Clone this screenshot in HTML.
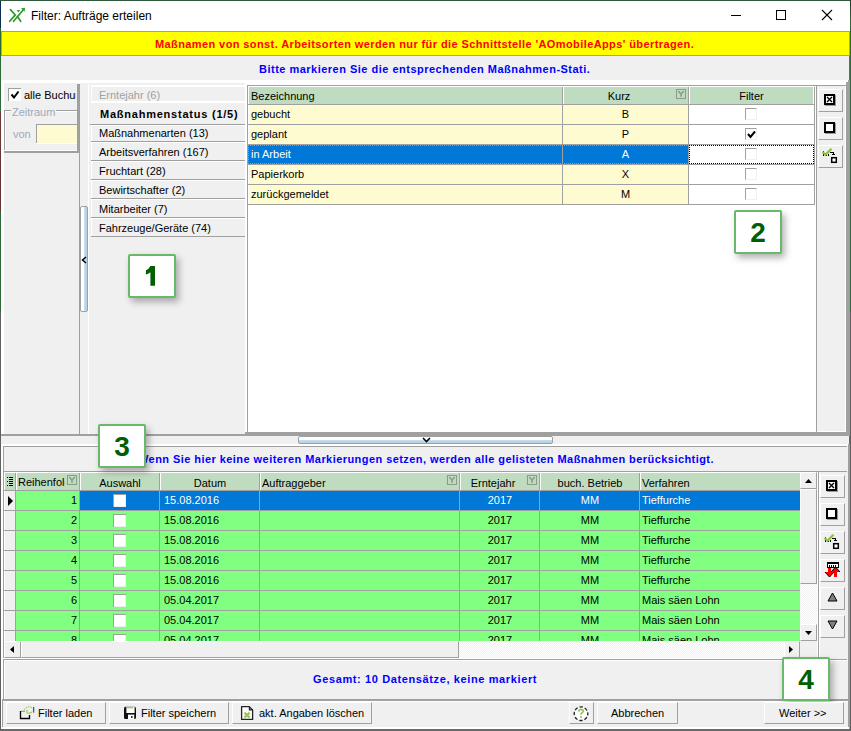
<!DOCTYPE html><html><head><meta charset="utf-8"><style>
*{box-sizing:border-box;margin:0;padding:0}
html,body{width:851px;height:731px;overflow:hidden;background:#2d5a3a}
body{position:relative;font-family:"Liberation Sans",sans-serif;font-size:11px;color:#000}
.a{position:absolute}
.t{white-space:nowrap;line-height:13px}
.btn{position:absolute;background:#f0f0f0;border-top:1px solid #fff;border-left:1px solid #fff;border-right:1px solid #a0a0a0;border-bottom:1px solid #a0a0a0}
.lbl{position:absolute;width:48px;height:44px;background:#fff;border:2px solid #6ab86a;box-shadow:3px 4px 7px rgba(0,0,0,.30);border-radius:2px;color:#006000;font-weight:bold;font-size:28px;text-align:center;line-height:42px}
.cb{position:absolute;width:12px;height:12px;background:#fff;border:1px solid #f0f0f0;border-top-color:#a0a0a0;border-left-color:#a0a0a0}
.cbw{position:absolute;width:13px;height:13px;background:#fff;border-top:1px solid #a0a0a0;border-left:1px solid #a0a0a0;box-shadow:inset -1px -1px 0 #f0f0f0}
</style></head><body>
<div class="a" style="left:1px;top:1px;width:849px;height:729px;background:#f0f0f0;"></div>
<div class="a" style="left:849px;top:1px;width:1px;height:730px;background:#6a6a6a;"></div>
<div class="a" style="left:850px;top:0px;width:1px;height:731px;background:linear-gradient(180deg,#1c3a2a 0,#2d6a3a 20px,#2d6a3a 312px,#606060 312px)"></div>
<div class="a" style="left:0px;top:729px;width:850px;height:2px;background:#6a6a6a;"></div>
<div class="a" style="left:0px;top:1px;width:1px;height:730px;background:linear-gradient(180deg,#0c2c50 0,#0c2c50 27px,#2d6a3a 27px,#2d6a3a 111px,#6a3434 111px,#6a3434 211px,#2d6a3a 211px,#2d6a3a 311px,#606060 311px)"></div>
<div class="a" style="left:1px;top:1px;width:849px;height:30px;background:#fff;"></div>
<svg class="a" style="left:6px;top:4px" width="24" height="24" viewBox="0 0 24 24"><g stroke="#2e9a2e" stroke-width="1.7" fill="none" stroke-linecap="round"><path d="M4.4 5.6 L9.3 10.9 L3.7 17.3"/><path d="M7.5 17.3 L17.2 6"/><path d="M11.4 12.6 L14.7 17.3"/></g><path d="M15 4.2 L19 3.8 L18.7 7.8 Z" fill="#2e9a2e"/><path d="M10.5 6.2 L14.2 5.9 L12.5 8.6 Z" fill="#2e9a2e"/></svg>
<div class="a t" style="left:31px;top:9px;font-size:12px;line-height:14px;color:#000">Filter: Aufträge erteilen</div>
<div class="a" style="left:731px;top:15px;width:10px;height:1px;background:#000;"></div>
<div class="a" style="left:776px;top:10px;width:10px;height:10px;border:1px solid #000"></div>
<svg class="a" style="left:821px;top:9px" width="12" height="12" viewBox="0 0 12 12"><path d="M1 1 L11 11 M11 1 L1 11" stroke="#000" stroke-width="1.1"/></svg>
<div class="a" style="left:1px;top:31px;width:849px;height:25px;background:#a0a0a0;"></div>
<div class="a" style="left:2px;top:32px;width:847px;height:23px;background:#ff0;"></div>
<div class="a t" style="left:155px;top:38px;color:#f00;font-weight:bold;letter-spacing:0.4px">Maßnamen von sonst. Arbeitsorten werden nur für die Schnittstelle 'AOmobileApps' übertragen.</div>
<div class="a t" style="left:259px;top:63px;color:#00f;font-weight:bold;letter-spacing:0.49px">Bitte markieren Sie die entsprechenden Maßnahmen-Stati.</div>
<div class="a" style="left:1px;top:80px;width:848px;height:3px;background:#fff;"></div>
<div class="a" style="left:245px;top:80px;width:604px;height:5px;background:#fff;"></div>
<div class="a" style="left:1px;top:80px;width:3px;height:356px;background:#fff;"></div>
<div class="a" style="left:848px;top:80px;width:2px;height:356px;background:#a0a0a0;"></div>
<div class="a" style="left:1px;top:434px;width:848px;height:2px;background:#a0a0a0;"></div>
<div class="a" style="left:4px;top:84px;width:75px;height:69px;background:#f0f0f0;"></div>
<div class="a" style="left:77px;top:84px;width:2px;height:69px;background:#a0a0a0;"></div>
<div class="a" style="left:4px;top:151px;width:75px;height:2px;background:#a0a0a0;"></div>
<div class="a" style="left:79px;top:84px;width:1px;height:351px;background:#a0a0a0;"></div>
<div class="a" style="left:88px;top:84px;width:1px;height:350px;background:#fff;"></div>
<div class="a" style="left:8px;top:88px;width:13px;height:13px;background:#fff;border-top:1px solid #a0a0a0;border-left:1px solid #a0a0a0"></div>
<svg class="a" style="left:10px;top:90px" width="10" height="10" viewBox="0 0 10 10"><path d="M1.5 4.5 L4 7.5 L8.5 1.5" stroke="#000" stroke-width="2" fill="none"/></svg>
<div class="a" style="left:24px;top:88px;width:52px;height:14px;overflow:hidden"><div class="t" style="line-height:13px;padding-top:1px">alle Buchungen</div></div>
<div class="a" style="left:4px;top:110px;width:73px;height:1px;background:#a0a0a0;"></div>
<div class="a" style="left:4px;top:110px;width:1px;height:41px;background:#a0a0a0;"></div>
<div class="a" style="left:5px;top:111px;width:72px;height:1px;background:#fff;"></div>
<div class="a" style="left:5px;top:111px;width:1px;height:39px;background:#fff;"></div>
<div class="a" style="left:4px;top:150px;width:73px;height:1px;background:#fff;"></div>
<div class="a t" style="left:11px;top:106px;color:#a0a8bc;background:#f0f0f0;padding:0 1px">Zeitraum</div>
<div class="a t" style="left:13px;top:128px;color:#a0a8bc">von</div>
<div class="a" style="left:36px;top:124px;width:1px;height:20px;background:#a0a0a0;"></div>
<div class="a" style="left:36px;top:124px;width:41px;height:1px;background:#a0a0a0;"></div>
<div class="a" style="left:37px;top:125px;width:40px;height:18px;background:#fffbd0;"></div>
<div class="a" style="left:36px;top:143px;width:41px;height:1px;background:#fff;"></div>
<div class="a" style="left:80px;top:206px;width:8px;height:106px;border:1px solid #a0a0a0;border-radius:2px;background:linear-gradient(90deg,#fff 0,#fff 3px,#c4dff0 3px,#b4cfe0 100%)"></div>
<svg class="a" style="left:81px;top:256px" width="6" height="8" viewBox="0 0 6 8"><path d="M5 1 L1.5 4 L5 7" stroke="#000" stroke-width="1.5" fill="none"/></svg>
<div class="a" style="left:89px;top:84px;width:156px;height:350px;background:#f0f0f0;"></div>
<div class="a" style="left:245px;top:84px;width:2px;height:348px;background:#fff;"></div>
<div class="a" style="left:91px;top:85px;width:154px;height:2px;background:#fff;"></div>
<div class="a" style="left:91px;top:85px;width:1px;height:17px;background:#fff;"></div>
<div class="a" style="left:92px;top:87px;width:153px;height:14px;background:#f0f0f0;"></div>
<div class="a" style="left:91px;top:101px;width:154px;height:2px;background:#fff;"></div>
<div class="a t" style="left:99px;top:89px;color:#a0a0a0">Erntejahr (6)</div>
<div class="a" style="left:90px;top:103px;width:155px;height:21px;background:#f0f0f0;"></div>
<div class="a" style="left:90px;top:124px;width:155px;height:1px;background:#a0a0a0;"></div>
<div class="a t" style="left:100px;top:108px;font-weight:bold;letter-spacing:0.77px;font-size:11px">Maßnahmenstatus (1/5)</div>
<div class="a" style="left:91px;top:125px;width:154px;height:1px;background:#fff;"></div>
<div class="a" style="left:91px;top:125px;width:1px;height:16px;background:#fff;"></div>
<div class="a" style="left:91px;top:141px;width:154px;height:1px;background:#a0a0a0;"></div>
<div class="a t" style="left:99px;top:127px;">Maßnahmenarten (13)</div>
<div class="a" style="left:91px;top:142px;width:154px;height:1px;background:#fff;"></div>
<div class="a" style="left:91px;top:142px;width:1px;height:18px;background:#fff;"></div>
<div class="a" style="left:91px;top:160px;width:154px;height:1px;background:#a0a0a0;"></div>
<div class="a t" style="left:99px;top:146px;">Arbeitsverfahren (167)</div>
<div class="a" style="left:91px;top:161px;width:154px;height:1px;background:#fff;"></div>
<div class="a" style="left:91px;top:161px;width:1px;height:18px;background:#fff;"></div>
<div class="a" style="left:91px;top:179px;width:154px;height:1px;background:#a0a0a0;"></div>
<div class="a t" style="left:99px;top:165px;">Fruchtart (28)</div>
<div class="a" style="left:91px;top:180px;width:154px;height:1px;background:#fff;"></div>
<div class="a" style="left:91px;top:180px;width:1px;height:18px;background:#fff;"></div>
<div class="a" style="left:91px;top:198px;width:154px;height:1px;background:#a0a0a0;"></div>
<div class="a t" style="left:99px;top:184px;">Bewirtschafter (2)</div>
<div class="a" style="left:91px;top:199px;width:154px;height:1px;background:#fff;"></div>
<div class="a" style="left:91px;top:199px;width:1px;height:18px;background:#fff;"></div>
<div class="a" style="left:91px;top:217px;width:154px;height:1px;background:#a0a0a0;"></div>
<div class="a t" style="left:99px;top:203px;">Mitarbeiter (7)</div>
<div class="a" style="left:91px;top:218px;width:154px;height:1px;background:#fff;"></div>
<div class="a" style="left:91px;top:218px;width:1px;height:18px;background:#fff;"></div>
<div class="a" style="left:91px;top:236px;width:154px;height:1px;background:#a0a0a0;"></div>
<div class="a t" style="left:99px;top:222px;">Fahrzeuge/Geräte (74)</div>
<div class="a" style="left:247px;top:85px;width:570px;height:347px;background:#a0a0a0;"></div>
<div class="a" style="left:248px;top:86px;width:568px;height:346px;background:#fff;"></div>
<div class="a" style="left:814px;top:87px;width:1px;height:118px;background:#a0a0a0;"></div>
<div class="a" style="left:249px;top:87px;width:564px;height:17px;background:#c0dcc0;"></div>
<div class="a" style="left:248px;top:104px;width:566px;height:1px;background:#a0a0a0;"></div>
<div class="a" style="left:562px;top:87px;width:1px;height:118px;background:#a0a0a0;"></div>
<div class="a" style="left:563px;top:87px;width:1px;height:17px;background:#fff;"></div>
<div class="a" style="left:688px;top:87px;width:1px;height:118px;background:#a0a0a0;"></div>
<div class="a" style="left:689px;top:87px;width:1px;height:17px;background:#fff;"></div>
<div class="a t" style="left:251px;top:90px;">Bezeichnung</div>
<div class="a t" style="left:563px;top:90px;width:112px;text-align:center">Kurz</div>
<div class="a t" style="left:689px;top:90px;width:125px;text-align:center">Filter</div>
<svg class="a" style="left:676px;top:89px" width="10" height="10" viewBox="0 0 10 10"><rect x="0.5" y="0.5" width="9" height="9" fill="none" stroke="#8a9c8a"/><path d="M2.3 2.2 L4.5 4.5 M7.7 2.2 L5.5 4.5" stroke="#7a8a7a" stroke-width="1.2"/><path d="M5 4.2 V7.8" stroke="#7a8a7a" stroke-width="1.3"/></svg>
<div class="a" style="left:249px;top:105px;width:313px;height:19px;background:#fffbd0;"></div>
<div class="a" style="left:563px;top:105px;width:125px;height:19px;background:#fffbd0;"></div>
<div class="a" style="left:689px;top:105px;width:125px;height:19px;background:#fff;"></div>
<div class="a" style="left:248px;top:124px;width:566px;height:1px;background:#a0a0a0;"></div>
<div class="a t" style="left:251px;top:108px;color:#000">gebucht</div>
<div class="a t" style="left:563px;top:108px;width:125px;text-align:center;color:#000">B</div>
<div class="cb" style="left:745px;top:108px"></div>
<div class="a" style="left:249px;top:125px;width:313px;height:19px;background:#fffbd0;"></div>
<div class="a" style="left:563px;top:125px;width:125px;height:19px;background:#fffbd0;"></div>
<div class="a" style="left:689px;top:125px;width:125px;height:19px;background:#fff;"></div>
<div class="a" style="left:248px;top:144px;width:566px;height:1px;background:#a0a0a0;"></div>
<div class="a t" style="left:251px;top:128px;color:#000">geplant</div>
<div class="a t" style="left:563px;top:128px;width:125px;text-align:center;color:#000">P</div>
<div class="cb" style="left:745px;top:128px"></div>
<svg class="a" style="left:746px;top:129px" width="11" height="11" viewBox="0 0 11 11"><path d="M2 5 L4.5 8 L9 2.5" stroke="#000" stroke-width="2" fill="none"/></svg>
<div class="a" style="left:249px;top:145px;width:313px;height:19px;background:#0078d7;"></div>
<div class="a" style="left:563px;top:145px;width:125px;height:19px;background:#0078d7;"></div>
<div class="a" style="left:689px;top:145px;width:125px;height:19px;background:#fff;"></div>
<div class="a" style="left:248px;top:164px;width:566px;height:1px;background:#a0a0a0;"></div>
<div class="a t" style="left:251px;top:148px;color:#fff">in Arbeit</div>
<div class="a t" style="left:563px;top:148px;width:125px;text-align:center;color:#fff">A</div>
<div class="cb" style="left:745px;top:148px"></div>
<div class="a" style="left:249px;top:165px;width:313px;height:19px;background:#fffbd0;"></div>
<div class="a" style="left:563px;top:165px;width:125px;height:19px;background:#fffbd0;"></div>
<div class="a" style="left:689px;top:165px;width:125px;height:19px;background:#fff;"></div>
<div class="a" style="left:248px;top:184px;width:566px;height:1px;background:#a0a0a0;"></div>
<div class="a t" style="left:251px;top:168px;color:#000">Papierkorb</div>
<div class="a t" style="left:563px;top:168px;width:125px;text-align:center;color:#000">X</div>
<div class="cb" style="left:745px;top:168px"></div>
<div class="a" style="left:249px;top:185px;width:313px;height:19px;background:#fffbd0;"></div>
<div class="a" style="left:563px;top:185px;width:125px;height:19px;background:#fffbd0;"></div>
<div class="a" style="left:689px;top:185px;width:125px;height:19px;background:#fff;"></div>
<div class="a" style="left:248px;top:204px;width:566px;height:1px;background:#a0a0a0;"></div>
<div class="a t" style="left:251px;top:188px;color:#000">zurückgemeldet</div>
<div class="a t" style="left:563px;top:188px;width:125px;text-align:center;color:#000">M</div>
<div class="cb" style="left:745px;top:188px"></div>
<div class="a" style="left:248px;top:145px;width:1px;height:19px;background:#0078d7;"></div>
<div class="a" style="left:248px;top:145px;width:441px;height:19px;border:1px dotted #f08a20;border-right:none"></div>
<div class="a" style="left:689px;top:145px;width:125px;height:19px;border:1px dotted #000"></div>
<div class="a" style="left:816px;top:85px;width:30px;height:1px;background:#a0a0a0;"></div>
<div class="a" style="left:817px;top:86px;width:28px;height:345px;background:#f0f0f0;"></div>
<div class="a" style="left:845px;top:86px;width:1px;height:346px;background:#fff;"></div>
<div class="a" style="left:817px;top:431px;width:29px;height:1px;background:#fff;"></div>
<div class="a" style="left:846px;top:82px;width:2px;height:352px;background:#a0a0a0;"></div>
<div class="a" style="left:245px;top:432px;width:603px;height:2px;background:#a0a0a0;"></div>
<div class="btn" style="left:818px;top:89px;width:25px;height:23px"></div>
<div class="btn" style="left:818px;top:117px;width:25px;height:23px"></div>
<div class="btn" style="left:818px;top:145px;width:25px;height:23px"></div>
<svg class="a" style="left:824px;top:94px" width="13" height="13" viewBox="0 0 13 13" shape-rendering="crispEdges"><rect x="0" y="0" width="11" height="11" fill="#000"/><rect x="2" y="2" width="7" height="7" fill="#fff"/><rect x="11" y="1" width="1" height="11" fill="#9a9a9a"/><rect x="1" y="11" width="11" height="1" fill="#9a9a9a"/></svg>
<svg class="a" style="left:824px;top:94px" width="11" height="11" viewBox="0 0 11 11"><path d="M3 3 L8 8 M8 3 L3 8" stroke="#000" stroke-width="1.4"/></svg>
<svg class="a" style="left:824px;top:122px" width="13" height="13" viewBox="0 0 13 13" shape-rendering="crispEdges"><rect x="0" y="0" width="11" height="11" fill="#000"/><rect x="2" y="2" width="7" height="7" fill="#fff"/><rect x="11" y="1" width="1" height="11" fill="#9a9a9a"/><rect x="1" y="11" width="11" height="1" fill="#9a9a9a"/></svg>
<svg class="a" style="left:822px;top:148px" width="18" height="18" viewBox="0 0 18 18"><g shape-rendering="crispEdges" fill="#000"><rect x="1" y="3" width="1" height="1"/><rect x="1" y="6" width="1" height="2"/><rect x="3" y="7" width="2" height="1"/><rect x="6" y="6" width="1" height="2"/><rect x="8" y="4" width="4" height="1"/><rect x="11" y="4" width="1" height="3"/><rect x="10" y="6" width="3" height="1"/></g><rect x="9.7" y="9.7" width="4.6" height="4.6" fill="#fff" stroke="#000" stroke-width="1.5"/><path d="M0.5 4 L3.5 6.8 L9.5 0.8" stroke="#8cbf46" stroke-width="2.2" fill="none"/></svg>
<div class="lbl" style="left:128px;top:254px"><svg style="position:absolute;left:0;top:0" width="44" height="40" viewBox="0 0 44 40"><path d="M20.4 10 H25 V29.7 H20.4 V16.2 Q18.3 18 15.9 18.6 V14.2 Q19 13 20.4 10 Z" fill="#006000"/></svg></div>
<div class="lbl" style="left:734px;top:210px">2</div>
<div class="a" style="left:298px;top:436px;width:255px;height:8px;border:1px solid #a0a0a0;border-radius:2px;background:linear-gradient(180deg,#fff 0,#fff 3px,#c4dff0 3px,#b4cfe0 100%)"></div>
<svg class="a" style="left:422px;top:437px" width="9" height="6" viewBox="0 0 9 6"><path d="M1 1 L4.5 4.5 L8 1" stroke="#000" stroke-width="1.6" fill="none"/></svg>
<div class="a" style="left:1px;top:444px;width:847px;height:2px;background:#fff;"></div>
<div class="a" style="left:3px;top:446px;width:844px;height:1px;background:#a0a0a0;"></div>
<div class="a" style="left:1px;top:446px;width:2px;height:283px;background:#fff;"></div>
<div class="a" style="left:3px;top:446px;width:1px;height:255px;background:#a0a0a0;"></div>
<div class="a" style="left:848px;top:444px;width:2px;height:285px;background:#a0a0a0;"></div>
<div class="a t" style="left:138px;top:453px;color:#00f;font-weight:bold;letter-spacing:0.44px">Wenn Sie hier keine weiteren Markierungen setzen, werden alle gelisteten Maßnahmen berücksichtigt.</div>
<div class="a" style="left:3px;top:471px;width:816px;height:187px;background:#a0a0a0;"></div>
<div class="a" style="left:4px;top:472px;width:814px;height:185px;background:#fff;"></div>
<div class="a" style="left:5px;top:473px;width:795px;height:17px;background:#c0dcc0;"></div>
<div class="a" style="left:4px;top:490px;width:796px;height:1px;background:#a0a0a0;"></div>
<div class="a" style="left:15px;top:473px;width:1px;height:168px;background:#a0a0a0;"></div>
<div class="a" style="left:16px;top:473px;width:1px;height:17px;background:#fff;"></div>
<div class="a" style="left:79px;top:473px;width:1px;height:168px;background:#a0a0a0;"></div>
<div class="a" style="left:80px;top:473px;width:1px;height:17px;background:#fff;"></div>
<div class="a" style="left:159px;top:473px;width:1px;height:168px;background:#a0a0a0;"></div>
<div class="a" style="left:160px;top:473px;width:1px;height:17px;background:#fff;"></div>
<div class="a" style="left:259px;top:473px;width:1px;height:168px;background:#a0a0a0;"></div>
<div class="a" style="left:260px;top:473px;width:1px;height:17px;background:#fff;"></div>
<div class="a" style="left:459px;top:473px;width:1px;height:168px;background:#a0a0a0;"></div>
<div class="a" style="left:460px;top:473px;width:1px;height:17px;background:#fff;"></div>
<div class="a" style="left:539px;top:473px;width:1px;height:168px;background:#a0a0a0;"></div>
<div class="a" style="left:540px;top:473px;width:1px;height:17px;background:#fff;"></div>
<div class="a" style="left:639px;top:473px;width:1px;height:168px;background:#a0a0a0;"></div>
<div class="a" style="left:640px;top:473px;width:1px;height:17px;background:#fff;"></div>
<svg class="a" style="left:6px;top:476px" width="8" height="11" viewBox="0 0 8 11" shape-rendering="crispEdges"><g fill="#000"><rect x="1" y="1" width="1" height="1"/><rect x="1" y="5" width="1" height="1"/><rect x="1" y="9" width="1" height="1"/><rect x="3" y="1" width="4" height="1"/><rect x="3" y="3" width="4" height="1"/><rect x="3" y="5" width="4" height="1"/><rect x="3" y="7" width="4" height="1"/><rect x="3" y="9" width="4" height="1"/></g></svg>
<div class="a" style="left:18px;top:476px;width:47px;height:13px;overflow:hidden"><div class="t">Reihenfolge</div></div>
<svg class="a" style="left:67px;top:475px" width="10" height="10" viewBox="0 0 10 10"><rect x="0.5" y="0.5" width="9" height="9" fill="none" stroke="#8a9c8a"/><path d="M2.3 2.2 L4.5 4.5 M7.7 2.2 L5.5 4.5" stroke="#7a8a7a" stroke-width="1.2"/><path d="M5 4.2 V7.8" stroke="#7a8a7a" stroke-width="1.3"/></svg>
<svg class="a" style="left:447px;top:475px" width="10" height="10" viewBox="0 0 10 10"><rect x="0.5" y="0.5" width="9" height="9" fill="none" stroke="#8a9c8a"/><path d="M2.3 2.2 L4.5 4.5 M7.7 2.2 L5.5 4.5" stroke="#7a8a7a" stroke-width="1.2"/><path d="M5 4.2 V7.8" stroke="#7a8a7a" stroke-width="1.3"/></svg>
<svg class="a" style="left:527px;top:475px" width="10" height="10" viewBox="0 0 10 10"><rect x="0.5" y="0.5" width="9" height="9" fill="none" stroke="#8a9c8a"/><path d="M2.3 2.2 L4.5 4.5 M7.7 2.2 L5.5 4.5" stroke="#7a8a7a" stroke-width="1.2"/><path d="M5 4.2 V7.8" stroke="#7a8a7a" stroke-width="1.3"/></svg>
<div class="a t" style="left:80px;top:477px;width:80px;text-align:center">Auswahl</div>
<div class="a t" style="left:160px;top:477px;width:100px;text-align:center">Datum</div>
<div class="a t" style="left:262px;top:477px;">Auftraggeber</div>
<div class="a t" style="left:460px;top:477px;width:66px;text-align:center">Erntejahr</div>
<div class="a t" style="left:540px;top:477px;width:100px;text-align:center">buch. Betrieb</div>
<div class="a t" style="left:642px;top:477px;">Verfahren</div>
<div class="a" style="left:4px;top:491px;width:796px;height:150px;overflow:hidden">
<div class="a" style="left:0px;top:0px;width:1px;height:19px;background:#fff;"></div>
<div class="a" style="left:1px;top:0px;width:10px;height:19px;background:#f0f0f0;"></div>
<div class="a" style="left:0px;top:19px;width:11px;height:1px;background:#a0a0a0;"></div>
<div class="a" style="left:12px;top:0px;width:63px;height:19px;background:#80ff80;"></div>
<div class="a" style="left:76px;top:0px;width:720px;height:19px;background:#0078d7;"></div>
<div class="a" style="left:12px;top:19px;width:784px;height:1px;background:#a0a0a0;"></div>
<div class="a" style="left:11px;top:0px;width:1px;height:20px;background:#a0a0a0;"></div>
<div class="a" style="left:75px;top:0px;width:1px;height:20px;background:#a0a0a0;"></div>
<div class="a" style="left:155px;top:0px;width:1px;height:20px;background:#a0a0a0;"></div>
<div class="a" style="left:255px;top:0px;width:1px;height:20px;background:#a0a0a0;"></div>
<div class="a" style="left:455px;top:0px;width:1px;height:20px;background:#a0a0a0;"></div>
<div class="a" style="left:535px;top:0px;width:1px;height:20px;background:#a0a0a0;"></div>
<div class="a" style="left:635px;top:0px;width:1px;height:20px;background:#a0a0a0;"></div>
<div class="a t" style="left:12px;top:3px;width:61px;text-align:right">1</div>
<div class="cbw" style="left:109px;top:3px"></div>
<div class="a t" style="left:160px;top:3px;color:#fff">15.08.2016</div>
<div class="a t" style="left:456px;top:3px;width:80px;text-align:center;color:#fff">2017</div>
<div class="a t" style="left:536px;top:3px;width:100px;text-align:center;color:#fff">MM</div>
<div class="a t" style="left:638px;top:3px;color:#fff">Tieffurche</div>
<div class="a" style="left:0px;top:20px;width:1px;height:19px;background:#fff;"></div>
<div class="a" style="left:1px;top:20px;width:10px;height:19px;background:#f0f0f0;"></div>
<div class="a" style="left:0px;top:39px;width:11px;height:1px;background:#a0a0a0;"></div>
<div class="a" style="left:12px;top:20px;width:63px;height:19px;background:#80ff80;"></div>
<div class="a" style="left:76px;top:20px;width:720px;height:19px;background:#80ff80;"></div>
<div class="a" style="left:12px;top:39px;width:784px;height:1px;background:#a0a0a0;"></div>
<div class="a" style="left:11px;top:20px;width:1px;height:20px;background:#a0a0a0;"></div>
<div class="a" style="left:75px;top:20px;width:1px;height:20px;background:#a0a0a0;"></div>
<div class="a" style="left:155px;top:20px;width:1px;height:20px;background:#a0a0a0;"></div>
<div class="a" style="left:255px;top:20px;width:1px;height:20px;background:#a0a0a0;"></div>
<div class="a" style="left:455px;top:20px;width:1px;height:20px;background:#a0a0a0;"></div>
<div class="a" style="left:535px;top:20px;width:1px;height:20px;background:#a0a0a0;"></div>
<div class="a" style="left:635px;top:20px;width:1px;height:20px;background:#a0a0a0;"></div>
<div class="a t" style="left:12px;top:23px;width:61px;text-align:right">2</div>
<div class="cbw" style="left:109px;top:23px"></div>
<div class="a t" style="left:160px;top:23px;color:#000">15.08.2016</div>
<div class="a t" style="left:456px;top:23px;width:80px;text-align:center;color:#000">2017</div>
<div class="a t" style="left:536px;top:23px;width:100px;text-align:center;color:#000">MM</div>
<div class="a t" style="left:638px;top:23px;color:#000">Tieffurche</div>
<div class="a" style="left:0px;top:40px;width:1px;height:19px;background:#fff;"></div>
<div class="a" style="left:1px;top:40px;width:10px;height:19px;background:#f0f0f0;"></div>
<div class="a" style="left:0px;top:59px;width:11px;height:1px;background:#a0a0a0;"></div>
<div class="a" style="left:12px;top:40px;width:63px;height:19px;background:#80ff80;"></div>
<div class="a" style="left:76px;top:40px;width:720px;height:19px;background:#80ff80;"></div>
<div class="a" style="left:12px;top:59px;width:784px;height:1px;background:#a0a0a0;"></div>
<div class="a" style="left:11px;top:40px;width:1px;height:20px;background:#a0a0a0;"></div>
<div class="a" style="left:75px;top:40px;width:1px;height:20px;background:#a0a0a0;"></div>
<div class="a" style="left:155px;top:40px;width:1px;height:20px;background:#a0a0a0;"></div>
<div class="a" style="left:255px;top:40px;width:1px;height:20px;background:#a0a0a0;"></div>
<div class="a" style="left:455px;top:40px;width:1px;height:20px;background:#a0a0a0;"></div>
<div class="a" style="left:535px;top:40px;width:1px;height:20px;background:#a0a0a0;"></div>
<div class="a" style="left:635px;top:40px;width:1px;height:20px;background:#a0a0a0;"></div>
<div class="a t" style="left:12px;top:43px;width:61px;text-align:right">3</div>
<div class="cbw" style="left:109px;top:43px"></div>
<div class="a t" style="left:160px;top:43px;color:#000">15.08.2016</div>
<div class="a t" style="left:456px;top:43px;width:80px;text-align:center;color:#000">2017</div>
<div class="a t" style="left:536px;top:43px;width:100px;text-align:center;color:#000">MM</div>
<div class="a t" style="left:638px;top:43px;color:#000">Tieffurche</div>
<div class="a" style="left:0px;top:60px;width:1px;height:19px;background:#fff;"></div>
<div class="a" style="left:1px;top:60px;width:10px;height:19px;background:#f0f0f0;"></div>
<div class="a" style="left:0px;top:79px;width:11px;height:1px;background:#a0a0a0;"></div>
<div class="a" style="left:12px;top:60px;width:63px;height:19px;background:#80ff80;"></div>
<div class="a" style="left:76px;top:60px;width:720px;height:19px;background:#80ff80;"></div>
<div class="a" style="left:12px;top:79px;width:784px;height:1px;background:#a0a0a0;"></div>
<div class="a" style="left:11px;top:60px;width:1px;height:20px;background:#a0a0a0;"></div>
<div class="a" style="left:75px;top:60px;width:1px;height:20px;background:#a0a0a0;"></div>
<div class="a" style="left:155px;top:60px;width:1px;height:20px;background:#a0a0a0;"></div>
<div class="a" style="left:255px;top:60px;width:1px;height:20px;background:#a0a0a0;"></div>
<div class="a" style="left:455px;top:60px;width:1px;height:20px;background:#a0a0a0;"></div>
<div class="a" style="left:535px;top:60px;width:1px;height:20px;background:#a0a0a0;"></div>
<div class="a" style="left:635px;top:60px;width:1px;height:20px;background:#a0a0a0;"></div>
<div class="a t" style="left:12px;top:63px;width:61px;text-align:right">4</div>
<div class="cbw" style="left:109px;top:63px"></div>
<div class="a t" style="left:160px;top:63px;color:#000">15.08.2016</div>
<div class="a t" style="left:456px;top:63px;width:80px;text-align:center;color:#000">2017</div>
<div class="a t" style="left:536px;top:63px;width:100px;text-align:center;color:#000">MM</div>
<div class="a t" style="left:638px;top:63px;color:#000">Tieffurche</div>
<div class="a" style="left:0px;top:80px;width:1px;height:19px;background:#fff;"></div>
<div class="a" style="left:1px;top:80px;width:10px;height:19px;background:#f0f0f0;"></div>
<div class="a" style="left:0px;top:99px;width:11px;height:1px;background:#a0a0a0;"></div>
<div class="a" style="left:12px;top:80px;width:63px;height:19px;background:#80ff80;"></div>
<div class="a" style="left:76px;top:80px;width:720px;height:19px;background:#80ff80;"></div>
<div class="a" style="left:12px;top:99px;width:784px;height:1px;background:#a0a0a0;"></div>
<div class="a" style="left:11px;top:80px;width:1px;height:20px;background:#a0a0a0;"></div>
<div class="a" style="left:75px;top:80px;width:1px;height:20px;background:#a0a0a0;"></div>
<div class="a" style="left:155px;top:80px;width:1px;height:20px;background:#a0a0a0;"></div>
<div class="a" style="left:255px;top:80px;width:1px;height:20px;background:#a0a0a0;"></div>
<div class="a" style="left:455px;top:80px;width:1px;height:20px;background:#a0a0a0;"></div>
<div class="a" style="left:535px;top:80px;width:1px;height:20px;background:#a0a0a0;"></div>
<div class="a" style="left:635px;top:80px;width:1px;height:20px;background:#a0a0a0;"></div>
<div class="a t" style="left:12px;top:83px;width:61px;text-align:right">5</div>
<div class="cbw" style="left:109px;top:83px"></div>
<div class="a t" style="left:160px;top:83px;color:#000">15.08.2016</div>
<div class="a t" style="left:456px;top:83px;width:80px;text-align:center;color:#000">2017</div>
<div class="a t" style="left:536px;top:83px;width:100px;text-align:center;color:#000">MM</div>
<div class="a t" style="left:638px;top:83px;color:#000">Tieffurche</div>
<div class="a" style="left:0px;top:100px;width:1px;height:19px;background:#fff;"></div>
<div class="a" style="left:1px;top:100px;width:10px;height:19px;background:#f0f0f0;"></div>
<div class="a" style="left:0px;top:119px;width:11px;height:1px;background:#a0a0a0;"></div>
<div class="a" style="left:12px;top:100px;width:63px;height:19px;background:#80ff80;"></div>
<div class="a" style="left:76px;top:100px;width:720px;height:19px;background:#80ff80;"></div>
<div class="a" style="left:12px;top:119px;width:784px;height:1px;background:#a0a0a0;"></div>
<div class="a" style="left:11px;top:100px;width:1px;height:20px;background:#a0a0a0;"></div>
<div class="a" style="left:75px;top:100px;width:1px;height:20px;background:#a0a0a0;"></div>
<div class="a" style="left:155px;top:100px;width:1px;height:20px;background:#a0a0a0;"></div>
<div class="a" style="left:255px;top:100px;width:1px;height:20px;background:#a0a0a0;"></div>
<div class="a" style="left:455px;top:100px;width:1px;height:20px;background:#a0a0a0;"></div>
<div class="a" style="left:535px;top:100px;width:1px;height:20px;background:#a0a0a0;"></div>
<div class="a" style="left:635px;top:100px;width:1px;height:20px;background:#a0a0a0;"></div>
<div class="a t" style="left:12px;top:103px;width:61px;text-align:right">6</div>
<div class="cbw" style="left:109px;top:103px"></div>
<div class="a t" style="left:160px;top:103px;color:#000">05.04.2017</div>
<div class="a t" style="left:456px;top:103px;width:80px;text-align:center;color:#000">2017</div>
<div class="a t" style="left:536px;top:103px;width:100px;text-align:center;color:#000">MM</div>
<div class="a t" style="left:638px;top:103px;color:#000">Mais säen Lohn</div>
<div class="a" style="left:0px;top:120px;width:1px;height:19px;background:#fff;"></div>
<div class="a" style="left:1px;top:120px;width:10px;height:19px;background:#f0f0f0;"></div>
<div class="a" style="left:0px;top:139px;width:11px;height:1px;background:#a0a0a0;"></div>
<div class="a" style="left:12px;top:120px;width:63px;height:19px;background:#80ff80;"></div>
<div class="a" style="left:76px;top:120px;width:720px;height:19px;background:#80ff80;"></div>
<div class="a" style="left:12px;top:139px;width:784px;height:1px;background:#a0a0a0;"></div>
<div class="a" style="left:11px;top:120px;width:1px;height:20px;background:#a0a0a0;"></div>
<div class="a" style="left:75px;top:120px;width:1px;height:20px;background:#a0a0a0;"></div>
<div class="a" style="left:155px;top:120px;width:1px;height:20px;background:#a0a0a0;"></div>
<div class="a" style="left:255px;top:120px;width:1px;height:20px;background:#a0a0a0;"></div>
<div class="a" style="left:455px;top:120px;width:1px;height:20px;background:#a0a0a0;"></div>
<div class="a" style="left:535px;top:120px;width:1px;height:20px;background:#a0a0a0;"></div>
<div class="a" style="left:635px;top:120px;width:1px;height:20px;background:#a0a0a0;"></div>
<div class="a t" style="left:12px;top:123px;width:61px;text-align:right">7</div>
<div class="cbw" style="left:109px;top:123px"></div>
<div class="a t" style="left:160px;top:123px;color:#000">05.04.2017</div>
<div class="a t" style="left:456px;top:123px;width:80px;text-align:center;color:#000">2017</div>
<div class="a t" style="left:536px;top:123px;width:100px;text-align:center;color:#000">MM</div>
<div class="a t" style="left:638px;top:123px;color:#000">Mais säen Lohn</div>
<div class="a" style="left:0px;top:140px;width:1px;height:19px;background:#fff;"></div>
<div class="a" style="left:1px;top:140px;width:10px;height:19px;background:#f0f0f0;"></div>
<div class="a" style="left:0px;top:159px;width:11px;height:1px;background:#a0a0a0;"></div>
<div class="a" style="left:12px;top:140px;width:63px;height:19px;background:#80ff80;"></div>
<div class="a" style="left:76px;top:140px;width:720px;height:19px;background:#80ff80;"></div>
<div class="a" style="left:12px;top:159px;width:784px;height:1px;background:#a0a0a0;"></div>
<div class="a" style="left:11px;top:140px;width:1px;height:20px;background:#a0a0a0;"></div>
<div class="a" style="left:75px;top:140px;width:1px;height:20px;background:#a0a0a0;"></div>
<div class="a" style="left:155px;top:140px;width:1px;height:20px;background:#a0a0a0;"></div>
<div class="a" style="left:255px;top:140px;width:1px;height:20px;background:#a0a0a0;"></div>
<div class="a" style="left:455px;top:140px;width:1px;height:20px;background:#a0a0a0;"></div>
<div class="a" style="left:535px;top:140px;width:1px;height:20px;background:#a0a0a0;"></div>
<div class="a" style="left:635px;top:140px;width:1px;height:20px;background:#a0a0a0;"></div>
<div class="a t" style="left:12px;top:143px;width:61px;text-align:right">8</div>
<div class="cbw" style="left:109px;top:143px"></div>
<div class="a t" style="left:160px;top:143px;color:#000">05.04.2017</div>
<div class="a t" style="left:456px;top:143px;width:80px;text-align:center;color:#000">2017</div>
<div class="a t" style="left:536px;top:143px;width:100px;text-align:center;color:#000">MM</div>
<div class="a t" style="left:638px;top:143px;color:#000">Mais säen Lohn</div>
</div>
<svg class="a" style="left:8px;top:496px" width="6" height="10" viewBox="0 0 6 10"><path d="M0 0 L5 5 L0 10 Z" fill="#000"/></svg>
<div class="a" style="left:800px;top:472px;width:17px;height:169px;background-color:#f0f0f0;background-image:repeating-conic-gradient(#fff 0 25%,#f0f0f0 0 50%);background-size:2px 2px"></div>
<div class="btn" style="left:800px;top:472px;width:17px;height:17px"></div>
<svg class="a" style="left:805px;top:479px" width="7" height="4" viewBox="0 0 7 4"><path d="M0 4 L3.5 0 L7 4 Z" fill="#000"/></svg>
<div class="btn" style="left:800px;top:489px;width:17px;height:95px"></div>
<div class="btn" style="left:800px;top:624px;width:17px;height:17px"></div>
<svg class="a" style="left:805px;top:631px" width="7" height="4" viewBox="0 0 7 4"><path d="M0 0 L3.5 4 L7 0 Z" fill="#000"/></svg>
<div class="a" style="left:4px;top:641px;width:796px;height:17px;background-color:#f0f0f0;background-image:repeating-conic-gradient(#fff 0 25%,#f0f0f0 0 50%);background-size:2px 2px"></div>
<div class="btn" style="left:4px;top:641px;width:17px;height:17px"></div>
<svg class="a" style="left:10px;top:646px" width="4" height="7" viewBox="0 0 4 7"><path d="M4 0 L0 3.5 L4 7 Z" fill="#000"/></svg>
<div class="btn" style="left:21px;top:641px;width:438px;height:17px"></div>
<div class="btn" style="left:784px;top:641px;width:16px;height:17px"></div>
<svg class="a" style="left:789px;top:646px" width="4" height="7" viewBox="0 0 4 7"><path d="M0 0 L4 3.5 L0 7 Z" fill="#000"/></svg>
<div class="a" style="left:800px;top:641px;width:17px;height:17px;background:#f0f0f0;"></div>
<div class="a" style="left:3px;top:658px;width:816px;height:1px;background:#fff;"></div>
<div class="a" style="left:818px;top:471px;width:29px;height:1px;background:#a0a0a0;"></div>
<div class="a" style="left:819px;top:472px;width:1px;height:186px;background:#fff;"></div>
<div class="a" style="left:820px;top:472px;width:27px;height:186px;background:#f0f0f0;"></div>
<div class="btn" style="left:820px;top:475px;width:25px;height:23px"></div>
<div class="btn" style="left:820px;top:503px;width:25px;height:23px"></div>
<div class="btn" style="left:820px;top:531px;width:25px;height:23px"></div>
<div class="btn" style="left:820px;top:559px;width:25px;height:23px"></div>
<div class="btn" style="left:820px;top:587px;width:25px;height:23px"></div>
<div class="btn" style="left:820px;top:615px;width:25px;height:23px"></div>
<svg class="a" style="left:826px;top:480px" width="13" height="13" viewBox="0 0 13 13" shape-rendering="crispEdges"><rect x="0" y="0" width="11" height="11" fill="#000"/><rect x="2" y="2" width="7" height="7" fill="#fff"/><rect x="11" y="1" width="1" height="11" fill="#9a9a9a"/><rect x="1" y="11" width="11" height="1" fill="#9a9a9a"/></svg>
<svg class="a" style="left:826px;top:480px" width="11" height="11" viewBox="0 0 11 11"><path d="M3 3 L8 8 M8 3 L3 8" stroke="#000" stroke-width="1.4"/></svg>
<svg class="a" style="left:826px;top:508px" width="13" height="13" viewBox="0 0 13 13" shape-rendering="crispEdges"><rect x="0" y="0" width="11" height="11" fill="#000"/><rect x="2" y="2" width="7" height="7" fill="#fff"/><rect x="11" y="1" width="1" height="11" fill="#9a9a9a"/><rect x="1" y="11" width="11" height="1" fill="#9a9a9a"/></svg>
<svg class="a" style="left:824px;top:534px" width="18" height="18" viewBox="0 0 18 18"><g shape-rendering="crispEdges" fill="#000"><rect x="1" y="3" width="1" height="1"/><rect x="1" y="6" width="1" height="2"/><rect x="3" y="7" width="2" height="1"/><rect x="6" y="6" width="1" height="2"/><rect x="8" y="4" width="4" height="1"/><rect x="11" y="4" width="1" height="3"/><rect x="10" y="6" width="3" height="1"/></g><rect x="9.7" y="9.7" width="4.6" height="4.6" fill="#fff" stroke="#000" stroke-width="1.5"/><path d="M0.5 4 L3.5 6.8 L9.5 0.8" stroke="#8cbf46" stroke-width="2.2" fill="none"/></svg>
<svg class="a" style="left:824px;top:559px" width="18" height="20" viewBox="0 0 18 20"><g shape-rendering="crispEdges"><rect x="3" y="3" width="12" height="6" fill="#000"/><rect x="4" y="5" width="10" height="3" fill="#fff"/><rect x="5" y="5.5" width="1" height="2" fill="#000"/><rect x="7" y="5.5" width="1" height="2" fill="#000"/><rect x="9" y="5.5" width="1" height="2" fill="#000"/><rect x="11" y="5.5" width="1" height="2" fill="#000"/><rect x="4" y="9" width="3" height="4" fill="#f00"/><rect x="10" y="12" width="3" height="6" fill="#f00"/></g><path d="M1 13 L5.5 18 L10 13 Z" fill="#f00"/><path d="M1 13 L5.5 18 L10 13" stroke="#000" stroke-width="1" fill="none"/><path d="M7 13 L11.5 8 L16 13 Z" fill="#f00"/><path d="M7 13 L11.5 8 L16 13" stroke="#000" stroke-width="1" fill="none"/></svg>
<svg class="a" style="left:827px;top:592px" width="11" height="10" viewBox="0 0 11 10"><path d="M5.5 1 L10 9 L1 9 Z" fill="#808080" stroke="#000" stroke-width="1"/></svg>
<svg class="a" style="left:827px;top:620px" width="11" height="10" viewBox="0 0 11 10"><path d="M1 1 L10 1 L5.5 9 Z" fill="#808080" stroke="#000" stroke-width="1"/></svg>
<div class="a" style="left:3px;top:659px;width:844px;height:1px;background:#a0a0a0;"></div>
<div class="a" style="left:3px;top:659px;width:1px;height:41px;background:#a0a0a0;"></div>
<div class="a" style="left:4px;top:660px;width:843px;height:1px;background:#fff;"></div>
<div class="a" style="left:4px;top:660px;width:1px;height:39px;background:#fff;"></div>
<div class="a" style="left:2px;top:699px;width:846px;height:2px;background:#a0a0a0;"></div>
<div class="a t" style="left:313px;top:673px;color:#00f;font-weight:bold;letter-spacing:0.62px">Gesamt: 10 Datensätze, keine markiert</div>
<div class="a" style="left:2px;top:701px;width:1px;height:28px;background:#a0a0a0;"></div>
<div class="a" style="left:3px;top:701px;width:845px;height:1px;background:#fff;"></div>
<div class="a" style="left:1px;top:727px;width:848px;height:2px;background:#fff;"></div>
<div class="lbl" style="left:98px;top:424px">3</div>
<div class="lbl" style="left:782px;top:657px">4</div>
<div class="btn" style="left:6px;top:702px;width:100px;height:22px"></div>
<div class="a t" style="left:38px;top:707px;">Filter laden</div>
<div class="btn" style="left:109px;top:702px;width:120px;height:22px"></div>
<div class="a t" style="left:141px;top:707px;">Filter speichern</div>
<div class="btn" style="left:232px;top:702px;width:140px;height:22px"></div>
<div class="a t" style="left:259px;top:707px;">akt. Angaben löschen</div>
<div class="btn" style="left:569px;top:702px;width:25px;height:22px"></div>
<div class="btn" style="left:597px;top:702px;width:81px;height:22px"></div>
<div class="a t" style="left:611px;top:707px;">Abbrechen</div>
<div class="btn" style="left:764px;top:702px;width:80px;height:22px"></div>
<div class="a t" style="left:779px;top:707px;">Weiter &gt;&gt;</div>
<svg class="a" style="left:14px;top:700px" width="26" height="26" viewBox="0 0 26 26"><path d="M6.5 11 V18.5 H15.5 V15" stroke="#000" stroke-width="1.3" fill="none"/><path d="M7 11.3 H11" stroke="#888" stroke-width="1"/><path d="M10 9.8 L13.8 6.4 L18 7.6" stroke="#a6d465" stroke-width="1.3" fill="none" stroke-dasharray="1.6 1"/><path d="M18 12.2 Q15.5 13.6 13.2 12.8 Q12 11.2 13.8 10" stroke="#a6d465" stroke-width="1.4" fill="none"/><path d="M19.6 7 V12.6" stroke="#555" stroke-width="1.3"/></svg>
<svg class="a" style="left:118px;top:700px" width="26" height="26" viewBox="0 0 26 26"><rect x="6" y="6.8" width="12" height="12.2" rx="1.6" fill="#111"/><rect x="8.4" y="6.8" width="8.2" height="6.2" fill="#fff"/><rect x="9" y="7.2" width="6" height="1.1" fill="#8cc040"/><rect x="10" y="14.6" width="6.2" height="4.4" fill="#fff"/><rect x="13" y="16.2" width="1.6" height="1.6" fill="#000"/></svg>
<svg class="a" style="left:234px;top:700px" width="26" height="26" viewBox="0 0 26 26"><path d="M7.6 6.6 H15.2 L18.6 10 V19.4 H7.6 Z" fill="#fff" stroke="#222" stroke-width="1.3" stroke-linejoin="round"/><path d="M15.4 6.8 V9.8 H18.4" fill="none" stroke="#222" stroke-width="1.2"/><path d="M10.4 12.6 L15.6 17.6 M15.6 12.6 L10.4 17.6" stroke="#9cc45c" stroke-width="2.2"/></svg>
<svg class="a" style="left:566px;top:700px" width="32" height="26" viewBox="0 0 32 26"><circle cx="15" cy="13.7" r="6.8" fill="#fff" stroke="#222" stroke-width="1.3" stroke-dasharray="3.4 1.94" stroke-dashoffset="1.7"/><path d="M12.6 11.6 Q12.8 9.4 15 9.3 Q17.3 9.4 17.3 11.2 Q17.1 12.5 15.6 13.1 Q14.9 13.6 14.9 14.8" stroke="#9cc45c" stroke-width="1.7" fill="none"/><rect x="14" y="16.2" width="1.8" height="1.8" fill="#9cc45c"/></svg>
</body></html>
